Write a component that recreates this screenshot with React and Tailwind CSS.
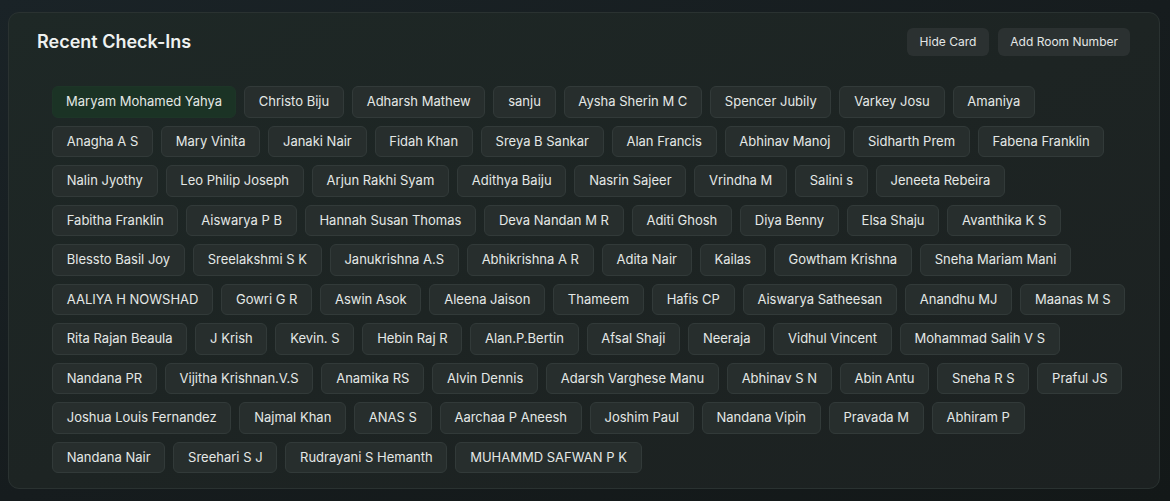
const names = [
  "Maryam Mohamed Yahya", "Christo Biju", "Adharsh Mathew", "sanju", "Aysha Sherin M C", "Spencer Jubily", "Varkey Josu", "Amaniya",
  "Anagha A S", "Mary Vinita", "Janaki Nair", "Fidah Khan", "Sreya B Sankar", "Alan Francis", "Abhinav Manoj", "Sidharth Prem", "Fabena Franklin",
  "Nalin Jyothy", "Leo Philip Joseph", "Arjun Rakhi Syam", "Adithya Baiju", "Nasrin Sajeer", "Vrindha M", "Salini s", "Jeneeta Rebeira",
  "Fabitha Franklin", "Aiswarya P B", "Hannah Susan Thomas", "Deva Nandan M R", "Aditi Ghosh", "Diya Benny", "Elsa Shaju", "Avanthika K S",
  "Blessto Basil Joy", "Sreelakshmi S K", "Janukrishna A.S", "Abhikrishna A R", "Adita Nair", "Kailas", "Gowtham Krishna", "Sneha Mariam Mani",
  "AALIYA H NOWSHAD", "Gowri G R", "Aswin Asok", "Aleena Jaison", "Thameem", "Hafis CP", "Aiswarya Satheesan", "Anandhu MJ", "Maanas M S",
  "Rita Rajan Beaula", "J Krish", "Kevin. S", "Hebin Raj R", "Alan.P.Bertin", "Afsal Shaji", "Neeraja", "Vidhul Vincent", "Mohammad Salih V S",
  "Nandana PR", "Vijitha Krishnan.V.S", "Anamika RS", "Alvin Dennis", "Adarsh Varghese Manu", "Abhinav S N", "Abin Antu", "Sneha R S", "Praful JS",
  "Joshua Louis Fernandez", "Najmal Khan", "ANAS S", "Aarchaa P Aneesh", "Joshim Paul", "Nandana Vipin", "Pravada M", "Abhiram P",
  "Nandana Nair", "Sreehari S J", "Rudrayani S Hemanth", "MUHAMMD SAFWAN P K",
];

export default function App() {
  return (
    <div
      className="h-[501px] w-full overflow-hidden bg-gradient-to-br from-[#1a2327] via-[#161c1e] to-[#131818] pt-3 pl-2"
      style={{ fontFamily: "Inter, 'Noto Sans', sans-serif" }}
    >
      <div className="w-[1152px] h-[477px] rounded-[11px] border border-[#2a3231] bg-gradient-to-br from-[#1e2826] via-[#1d2423] to-[#1c2121] pl-[28px] pr-[29px] pt-[15px]">
        <div className="flex items-center justify-between">
          <h2 className="text-[18px] font-semibold leading-7 text-[#eef1f0]">Recent Check-Ins</h2>
          <div className="flex gap-[9px]">
            <button className="h-[28px] rounded-[6px] bg-[#2b3131] px-[13px] text-[12px] text-[#e3e6e5]">Hide Card</button>
            <button className="h-[28px] rounded-[6px] bg-[#2b3131] px-[12px] text-[12px] text-[#e3e6e5]">Add Room Number</button>
          </div>
        </div>
        <div className="mt-[30px] flex w-[1094px] flex-wrap gap-x-2 gap-y-2 pl-[15px]">
          {names.map((n, i) => (
            <div
              key={n}
              className={
                i === 0
                  ? "rounded-[6px] border border-[#1d3527] bg-[#1b3325] px-[13px] py-[5px] text-[13px] leading-[19.5px] text-[#e4e8e6]"
                  : "rounded-[6px] border border-[#323a39] bg-[#272e2d] px-[13.75px] py-[5px] text-[13px] leading-[19.5px] text-[#e4e8e6]"
              }
            >
              {n}
            </div>
          ))}
        </div>
      </div>
    </div>
  );
}
